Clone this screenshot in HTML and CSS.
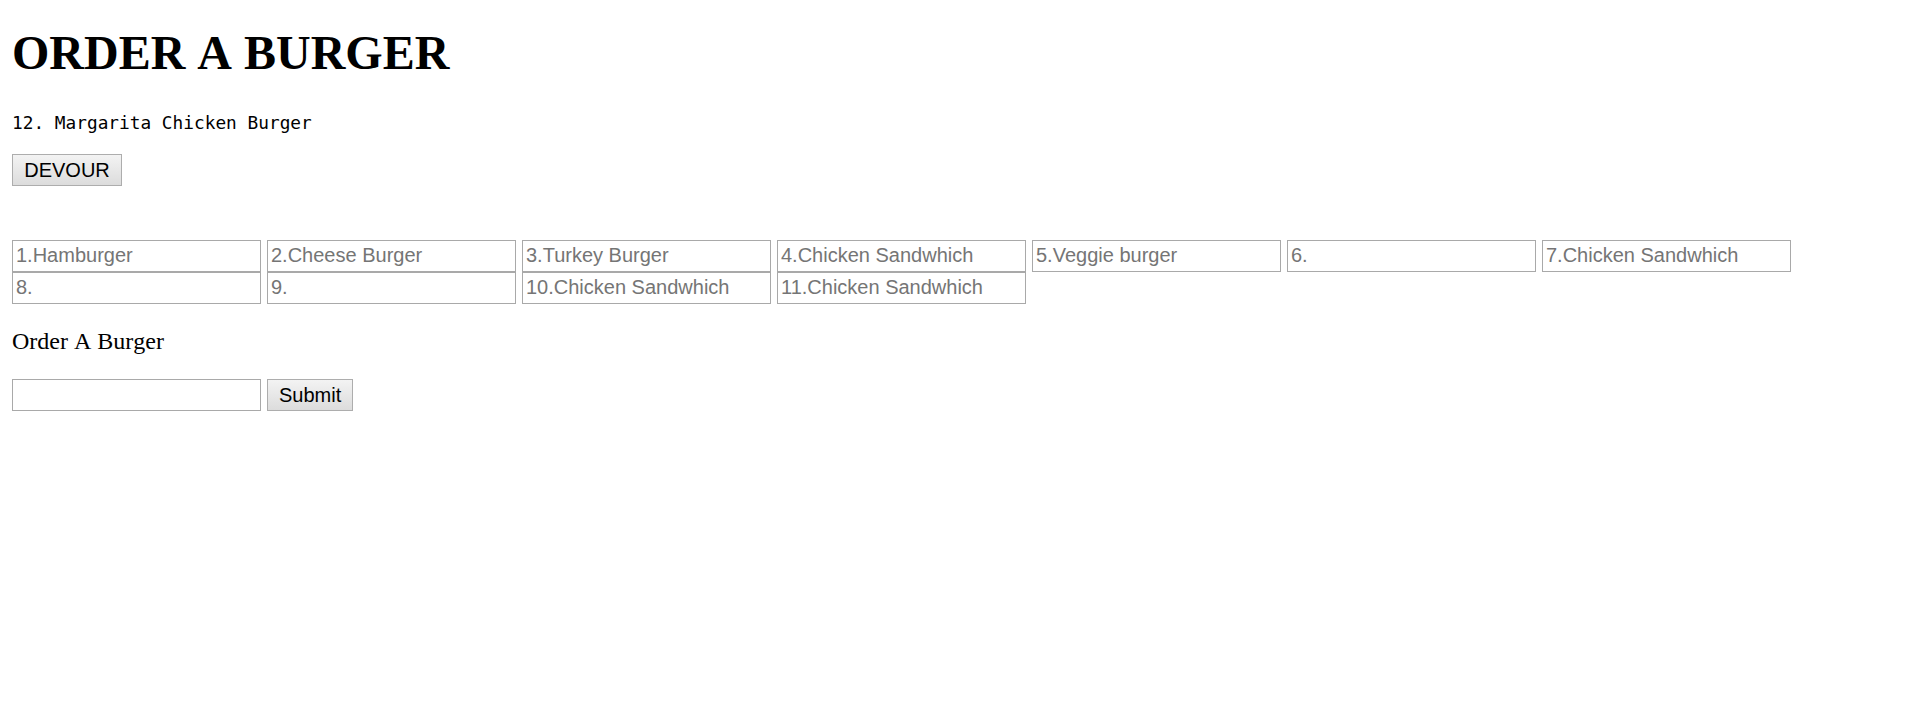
FILE: index.html
```html
<!DOCTYPE html>
<html lang="en">
<head>
<meta charset="utf-8">
<title>Order A Burger</title>
<link rel="stylesheet" href="styles.css">
</head>
<body>
  <h1 class="title">ORDER A BURGER</h1>
  <p class="devoured">12. Margarita Chicken Burger</p>
  <button class="btn devour-btn" type="button">DEVOUR</button>
  <div class="menu">
    <input class="field" type="text" placeholder="1.Hamburger">
    <input class="field" type="text" placeholder="2.Cheese Burger">
    <input class="field" type="text" placeholder="3.Turkey Burger">
    <input class="field" type="text" placeholder="4.Chicken Sandwhich">
    <input class="field" type="text" placeholder="5.Veggie burger">
    <input class="field" type="text" placeholder="6.">
    <input class="field" type="text" placeholder="7.Chicken Sandwhich">
    <input class="field" type="text" placeholder="8.">
    <input class="field" type="text" placeholder="9.">
    <input class="field" type="text" placeholder="10.Chicken Sandwhich">
    <input class="field" type="text" placeholder="11.Chicken Sandwhich">
  </div>
  <p class="label">Order A Burger</p>
  <form class="order" onsubmit="return false;">
    <input class="field" type="text">
    <button class="btn" type="submit">Submit</button>
  </form>
</body>
</html>
```

FILE: styles.css
```css
html, body {
  background: #ffffff;
}

body {
  margin: 0 12px;
  font-family: "Liberation Serif", "Times New Roman", serif;
  font-size: 24px;
  font-kerning: none;
  color: #000000;
}

.title {
  margin: 26px 0 0;
  font-size: 48px;
  font-weight: 700;
  line-height: 54px;
  font-kerning: none;
}

.devoured {
  margin: 32px 0 0;
  font-family: "DejaVu Sans Mono", "Liberation Mono", monospace;
  font-size: 17.8px;
  line-height: 21px;
}

.btn {
  display: block;
  box-sizing: border-box;
  height: 32px;
  padding: 0 11px;
  border: 1px solid #adadad;
  border-radius: 0;
  background: linear-gradient(#f3f3f3, #dcdcdc);
  font-family: "Liberation Sans", Arial, sans-serif;
  font-size: 20px;
  color: #000000;
  line-height: 30px;
}

.devour-btn {
  margin-top: 21px;
  width: 110px;
}

.menu {
  display: flex;
  flex-wrap: wrap;
  column-gap: 6px;
  margin-top: 54px;
}

.field {
  display: block;
  box-sizing: border-box;
  width: 249px;
  height: 32px;
  margin: 0;
  padding: 0 3px 2px;
  border: 1px solid #a9a9a9;
  background: #ffffff;
  font-family: "Liberation Sans", Arial, sans-serif;
  font-size: 20px;
  color: #000000;
}

.field::placeholder {
  color: #757575;
  opacity: 1;
}

.label {
  margin: 24px 0 0;
  line-height: 27px;
}

.order {
  display: flex;
  gap: 6px;
  margin-top: 24px;
}

.order .btn {
  width: 86px;
}
```
